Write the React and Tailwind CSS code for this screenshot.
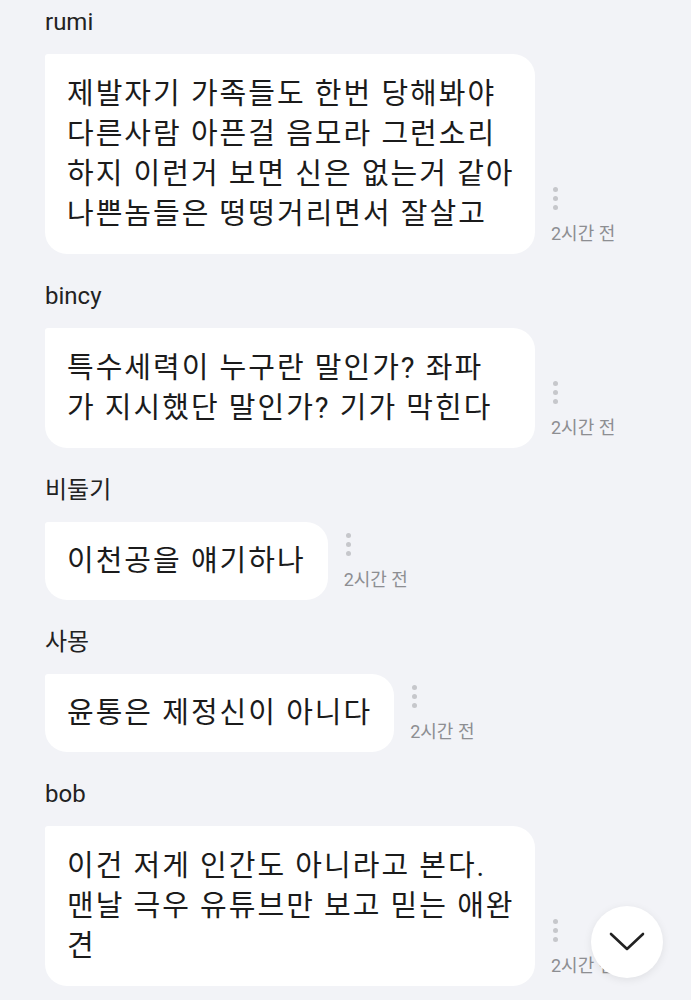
const messages = [
  {
    name: "rumi",
    lines: [
      "제발자기 가족들도 한번 당해봐야",
      "다른사람 아픈걸 음모라 그런소리",
      "하지 이런거 보면 신은 없는거 같아",
      "나쁜놈들은 떵떵거리면서 잘살고",
    ],
  },
  {
    name: "bincy",
    lines: ["특수세력이 누구란 말인가? 좌파", "가 지시했단 말인가? 기가 막힌다"],
  },
  { name: "비둘기", lines: ["이천공을 얘기하나"] },
  { name: "사몽", lines: ["윤통은 제정신이 아니다"] },
  {
    name: "bob",
    lines: [
      "이건 저게 인간도 아니라고 본다.",
      "맨날 극우 유튜브만 보고 믿는 애완",
      "견",
    ],
  },
];

function Message({ name, lines }) {
  const wide = lines.length > 1;
  return (
    <div className="flex flex-col">
      <div className="text-[24px] leading-[30px] text-[#222]">{name}</div>
      <div className="mt-[17px] flex items-end gap-[16px]">
        <div
          className={`bg-white rounded-[22px] rounded-tl-[3px] px-[22px] text-[29px] tracking-[2px] leading-[40px] text-[#1b1b1b] ${
            wide ? "w-[490px] py-[20px]" : "py-[19px]"
          }`}
        >
          {lines.map((l, i) => (
            <div key={i} className="whitespace-nowrap">
              {l}
            </div>
          ))}
        </div>
        <div className="flex flex-col items-start pb-[9px]">
          <div className="ml-[2px] flex flex-col gap-[4px]">
            <span className="block w-[5px] h-[5px] rounded-full bg-[#c6c7cb]" />
            <span className="block w-[5px] h-[5px] rounded-full bg-[#c6c7cb]" />
            <span className="block w-[5px] h-[5px] rounded-full bg-[#c6c7cb]" />
          </div>
          <div className="mt-[13px] text-[18px] leading-[22px] text-[#8d8e92] whitespace-nowrap">
            2시간 전
          </div>
        </div>
      </div>
    </div>
  );
}

export default function App() {
  return (
    <div
      className="relative h-[1000px] overflow-hidden bg-[#f2f3f7] pl-[45px] pt-[7px]"
      style={{ fontFamily: 'Roboto, "Noto Sans CJK KR", sans-serif' }}
    >
      <div className="flex flex-col gap-[27px]">
        {messages.map((m) => (
          <Message key={m.name} {...m} />
        ))}
      </div>

      {/* scroll to bottom */}
      <button className="absolute left-[591px] top-[906px] w-[72px] h-[72px] rounded-full bg-white shadow-[0_2px_8px_rgba(0,0,0,0.08)] flex items-center justify-center">
        <svg width="36" height="20" viewBox="0 0 36 20" fill="none">
          <path d="M2 2 L18 17 L34 2" stroke="#222" strokeWidth="2.6" strokeLinecap="round" strokeLinejoin="round" />
        </svg>
      </button>
    </div>
  );
}
